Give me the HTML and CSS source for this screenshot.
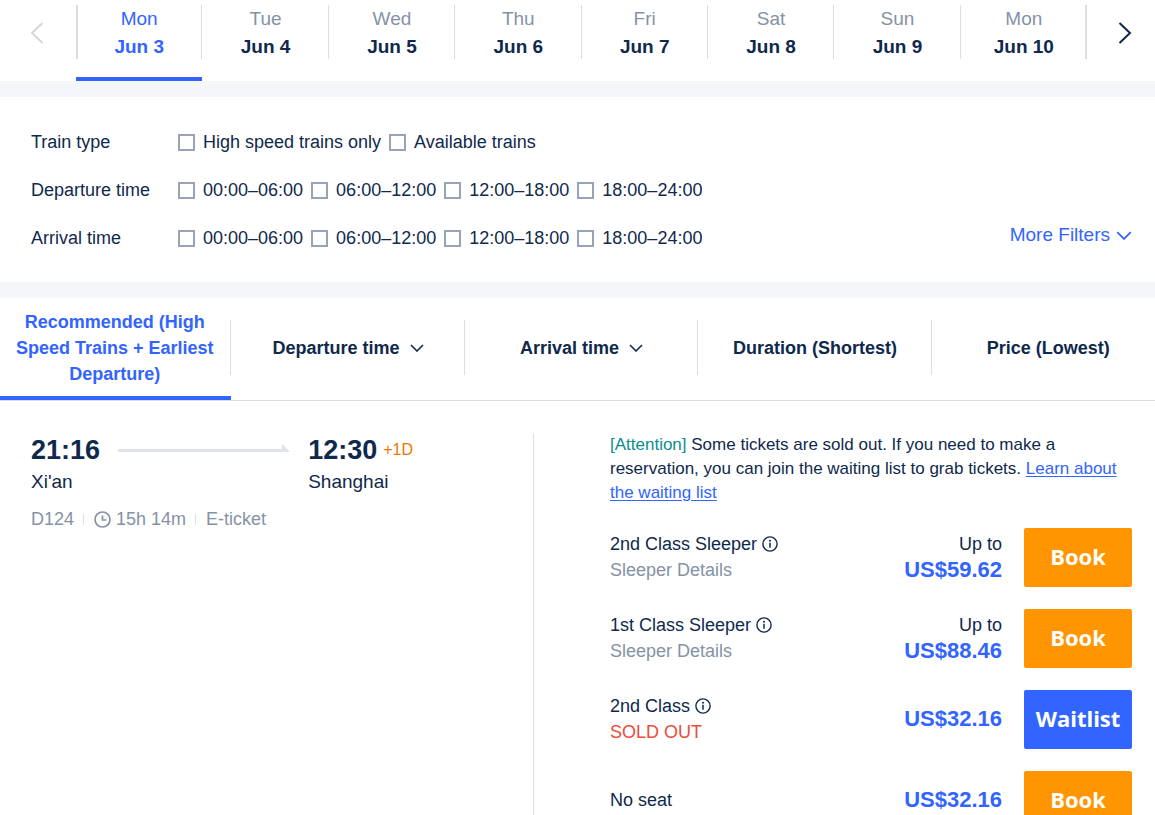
FILE: index.html
```html
<!DOCTYPE html>
<html lang="en">
<head>
<meta charset="utf-8">
<meta name="viewport" content="width=device-width, initial-scale=1">
<title>Trains from Xi'an to Shanghai</title>
<link rel="stylesheet" href="styles.css">
</head>
<body>
<svg class="sprite" aria-hidden="true">
  <symbol id="info" viewBox="0 0 16 16"><circle cx="8" cy="8" r="7.1" fill="none" stroke="currentColor" stroke-width="1.4"/><circle cx="8" cy="4.7" r="1" fill="currentColor"/><path d="M8 6.8v5" stroke="currentColor" stroke-width="1.5"/></symbol>
  <symbol id="down" viewBox="0 0 14 8"><path d="M1 1l6 6 6-6" fill="none" stroke="currentColor" stroke-width="1.6"/></symbol>
</svg>
<main class="page">
  <nav class="dates" aria-label="Travel date">
    <button class="arrow arrow-prev" type="button" aria-label="Earlier dates" disabled><svg width="14" height="24" viewBox="0 0 14 24"><path d="M12.500 2L2 12l10.500 10" fill="none" stroke="currentColor" stroke-width="2"/></svg></button>
    <div class="days">
      <button class="day day-on" type="button"><span class="weekday">Mon</span><span class="date">Jun 3</span></button>
      <button class="day" type="button"><span class="weekday">Tue</span><span class="date">Jun 4</span></button>
      <button class="day" type="button"><span class="weekday">Wed</span><span class="date">Jun 5</span></button>
      <button class="day" type="button"><span class="weekday">Thu</span><span class="date">Jun 6</span></button>
      <button class="day" type="button"><span class="weekday">Fri</span><span class="date">Jun 7</span></button>
      <button class="day" type="button"><span class="weekday">Sat</span><span class="date">Jun 8</span></button>
      <button class="day" type="button"><span class="weekday">Sun</span><span class="date">Jun 9</span></button>
      <button class="day" type="button"><span class="weekday">Mon</span><span class="date">Jun 10</span></button>
    </div>
    <button class="arrow arrow-next" type="button" aria-label="Later dates"><svg width="14" height="24" viewBox="0 0 14 24"><path d="M1.500 2L12 12 1.500 22" fill="none" stroke="currentColor" stroke-width="2"/></svg></button>
  </nav>

  <section class="filters" aria-label="Filters">
    <div class="filter-rows">
      <div class="filter"><span class="filter-name">Train type</span>
        <div class="options">
          <label class="option"><input class="box" type="checkbox">High speed trains only</label>
          <label class="option"><input class="box" type="checkbox">Available trains</label>
        </div>
      </div>
      <div class="filter"><span class="filter-name">Departure time</span>
        <div class="options">
          <label class="option"><input class="box" type="checkbox">00:00–06:00</label>
          <label class="option"><input class="box" type="checkbox">06:00–12:00</label>
          <label class="option"><input class="box" type="checkbox">12:00–18:00</label>
          <label class="option"><input class="box" type="checkbox">18:00–24:00</label>
        </div>
      </div>
      <div class="filter"><span class="filter-name">Arrival time</span>
        <div class="options">
          <label class="option"><input class="box" type="checkbox">00:00–06:00</label>
          <label class="option"><input class="box" type="checkbox">06:00–12:00</label>
          <label class="option"><input class="box" type="checkbox">12:00–18:00</label>
          <label class="option"><input class="box" type="checkbox">18:00–24:00</label>
        </div>
      </div>
    </div>
    <button class="more" type="button">More Filters<svg width="16" height="9"><use href="#down"/></svg></button>
  </section>

  <section class="sortbar" aria-label="Sort by">
    <div class="sorts">
      <button class="sort sort-on" type="button">Recommended (High Speed Trains + Earliest Departure)</button>
      <button class="sort" type="button">Departure time<svg width="14" height="8"><use href="#down"/></svg></button>
      <button class="sort" type="button">Arrival time<svg width="14" height="8"><use href="#down"/></svg></button>
      <button class="sort" type="button">Duration (Shortest)</button>
      <button class="sort" type="button">Price (Lowest)</button>
    </div>
  </section>

  <article class="train">
    <div class="trip">
      <div class="route">
        <div class="stop"><span class="time">21:16</span><span class="city">Xi'an</span></div>
        <div class="line"><svg class="tip" width="8" height="8" viewBox="0 0 8 8" aria-hidden="true"><path d="M0 0v8h8z" fill="#dfe2ea"/></svg></div>
        <div class="stop"><span class="time">12:30<span class="plus">+1D</span></span><span class="city">Shanghai</span></div>
      </div>
      <div class="meta">
        <span>D124</span>
        <span class="meta-item"><svg width="17" height="17" viewBox="0 0 17 17" aria-hidden="true"><circle cx="8.500" cy="8.500" r="7.500" fill="none" stroke="currentColor" stroke-width="1.700"/><path d="M8.500 4.500v4.500h4" fill="none" stroke="currentColor" stroke-width="1.700"/></svg>15h 14m</span>
        <span class="meta-item">E-ticket</span>
      </div>
    </div>
    <div class="fares">
      <p class="notice"><span class="attention">[Attention]</span> Some tickets are sold out. If you need to make a reservation, you can join the waiting list to grab tickets. <a class="learn" href="#">Learn about the waiting list</a></p>
      <div class="fare">
        <div class="seat"><span class="seat-name">2nd Class Sleeper<svg width="16" height="16"><use href="#info"/></svg></span><span class="detail">Sleeper Details</span></div>
        <div class="cost"><span>Up to</span><strong class="price">US$59.62</strong></div>
        <button class="buy" type="button">Book</button>
      </div>
      <div class="fare">
        <div class="seat"><span class="seat-name">1st Class Sleeper<svg width="16" height="16"><use href="#info"/></svg></span><span class="detail">Sleeper Details</span></div>
        <div class="cost"><span>Up to</span><strong class="price">US$88.46</strong></div>
        <button class="buy" type="button">Book</button>
      </div>
      <div class="fare">
        <div class="seat"><span class="seat-name">2nd Class<svg width="16" height="16"><use href="#info"/></svg></span><span class="soldout">SOLD OUT</span></div>
        <div class="cost"><strong class="price">US$32.16</strong></div>
        <button class="buy buy-wait" type="button">Waitlist</button>
      </div>
      <div class="fare">
        <div class="seat"><span class="seat-name">No seat</span></div>
        <div class="cost"><strong class="price">US$32.16</strong></div>
        <button class="buy" type="button">Book</button>
      </div>
    </div>
  </article>
</main>
</body>
</html>
```

FILE: styles.css
```css
* { box-sizing: border-box; }

body {
  margin: 0;
  background: #fff;
  color: #0f294d;
  font: 18px/26px "Liberation Sans", Arial, sans-serif;
}

button {
  margin: 0;
  padding: 0;
  border: 0;
  background: none;
  color: inherit;
  font: inherit;
  cursor: pointer;
}

.sprite { position: absolute; width: 0; height: 0; }

.page {
  display: flex;
  flex-direction: column;
  height: 100vh;
  overflow: hidden;
}

.page > * { flex-shrink: 0; }

/* Date strip */
.dates {
  display: grid;
  grid-template-columns: 76px 1fr 68px;
  border-bottom: 16px solid #f4f6fa;
  font-size: 19px;
  line-height: 28px;
}

.arrow {
  display: flex;
  align-items: center;
  justify-content: center;
  padding-bottom: 16px;
}

.arrow-prev { padding-right: 2px; color: #d5d7dc; }
.arrow-next { padding-left: 8px; }

.days {
  display: grid;
  grid-template-columns: repeat(8, 1fr);
  background: linear-gradient(#dadcdf, #dadcdf) 0 5px / 2px 54px no-repeat;
}

.day {
  display: flex;
  flex-direction: column;
  align-items: center;
  padding: 5px 0 16px;
  border-bottom: 4px solid transparent;
  background: linear-gradient(#dadfe2, #dadfe2) right 5px / 1px 54px no-repeat;
}

.day:last-child { background-size: 2px 54px; }
.weekday { color: #8592a6; }
.date { font-weight: bold; }
.day-on { border-bottom-color: #3264ff; }
.day-on, .day-on .weekday { color: #3264ff; }

/* Filters */
.filters {
  display: flex;
  justify-content: space-between;
  align-items: flex-end;
  padding: 29px 23px 31px 31px;
  border-bottom: 16px solid #f4f6fa;
}

.filter-rows { display: grid; gap: 22px; padding-top: 3px; }
.filter { display: flex; }
.filter-name { width: 147px; }
.options { display: flex; gap: 8px; }
.option { display: flex; align-items: center; gap: 8px; }

.box {
  appearance: none;
  width: 17px;
  height: 17px;
  margin: 0;
  border: 2px solid #98a2b8;
  background: #fff;
}

.box:checked { background: #3264ff; }

.more {
  display: flex;
  align-items: center;
  gap: 6px;
  padding-bottom: 3px;
  color: #3264ff;
  font-size: 19px;
}

/* Sorting */
.sortbar {
  overflow: hidden;
  border-bottom: 1px solid #dadde2;
}

.sorts {
  display: grid;
  grid-template-columns: repeat(5, 1fr);
  margin: 0 -10px 0 -2px;
}

.sort {
  display: flex;
  align-items: center;
  justify-content: center;
  gap: 10px;
  padding: 11px 16px 9px;
  border-bottom: 4px solid transparent;
  background: linear-gradient(#dadfe2, #dadfe2) right 22px / 1px 55px no-repeat;
  font-weight: bold;
}

.sort-on { color: #3264ff; border-bottom-color: #3264ff; }

/* Train */
.train {
  display: grid;
  grid-template-columns: 534px 1fr;
  padding-top: 32px;
}

.trip {
  padding: 0 120px 0 31px;
  border-right: 1px solid #dadfe6;
}

.route { display: flex; gap: 18px; }
.stop { display: flex; flex-direction: column; }
.time { display: flex; align-items: center; gap: 6px; font-size: 27px; line-height: 34px; font-weight: bold; }
.plus { color: #ee7700; font-size: 16px; font-weight: normal; }
.city { font-size: 19px; line-height: 30px; }

.line {
  display: flex;
  flex: 1;
  justify-content: flex-end;
  height: 8px;
  margin-top: 11px;
  background: linear-gradient(#dfe2ea, #dfe2ea) left bottom / calc(100% - 4px) 3px no-repeat;
}

.meta {
  display: flex;
  gap: 9px;
  margin-top: 9px;
  color: #8592a6;
}

.meta-item {
  display: flex;
  align-items: center;
  gap: 5px;
  padding-left: 11px;
  background: linear-gradient(#dadfe6, #dadfe6) left center / 1px 11px no-repeat;
}

/* Fares */
.fares {
  display: flex;
  flex-direction: column;
  gap: 22px;
  padding: 0 23px 22px 76px;
}

.notice { margin: 0 0 1px; font-size: 17px; line-height: 24px; }
.attention { color: #0b8e8e; }
.learn { color: #3264ff; text-underline-offset: 2px; }

.fare {
  display: grid;
  grid-template-columns: 1fr auto 108px;
  gap: 22px;
  align-items: center;
  min-height: 59px;
}

.seat, .cost { display: flex; flex-direction: column; padding-bottom: 2px; }
.cost { align-items: flex-end; }
.seat-name { display: flex; align-items: center; gap: 5px; }
.detail { color: #8592a6; }
.soldout { color: #ee4b3a; }
.price { color: #3264ff; font-size: 22px; }

.buy {
  height: 59px;
  padding-bottom: 3px;
  border-radius: 2px;
  background: #ff9500;
  color: #fff;
  font: bold 22px/30px "Open Sans", "Noto Sans", sans-serif;
}

.buy-wait { background: #3264ff; }
```
